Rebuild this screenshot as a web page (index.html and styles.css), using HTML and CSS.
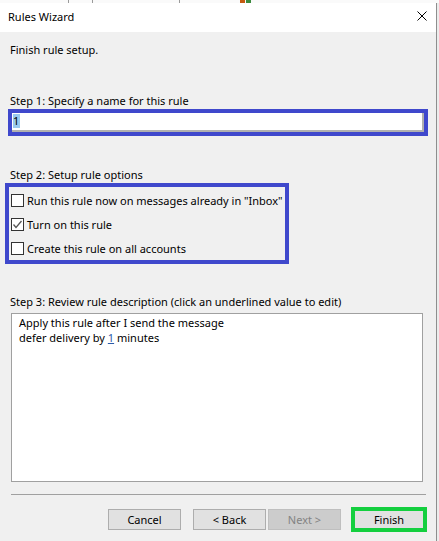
FILE: index.html
```html
<!DOCTYPE html>
<html>
<head>
<meta charset="utf-8">
<title>Rules Wizard</title>
<link rel="stylesheet" href="styles.css">
</head>
<body>
<div class="strip">
  <span class="seg seg-a"></span>
  <span class="seg seg-b"></span>
  <span class="seg seg-c"></span>
  <span class="seg seg-d"></span>
  <span class="chip chip-o"></span>
  <span class="chip chip-g"></span>
  <span class="seg seg-e"></span>
</div>
<div class="dialog">
  <div class="titlebar">
    <span class="title">Rules Wizard</span>
    <svg class="close" width="10" height="10" viewBox="0 0 10 10" aria-hidden="true">
      <path d="M0.5 0.5 L9.5 9.5 M9.5 0.5 L0.5 9.5" stroke="#000" stroke-width="1" fill="none"/>
    </svg>
  </div>
  <div class="content">
    <p class="line intro">Finish rule setup.</p>
    <p class="line step1">Step 1: Specify a name for this rule</p>
    <div class="mark-blue name-mark">
      <div class="textbox"><span class="sel">1</span></div>
    </div>
    <p class="line step2">Step 2: Setup rule options</p>
    <div class="mark-blue opts-mark">
      <div class="row"><span class="cb"></span><span>Run this rule now on messages already in "Inbox"</span></div>
      <div class="row"><span class="cb"><svg width="11" height="11" viewBox="0 0 11 11" aria-hidden="true"><path d="M1.5 5.5 L4 8.5 L9.5 2" stroke="#555" stroke-width="1.3" fill="none"/></svg></span><span>Turn on this rule</span></div>
      <div class="row"><span class="cb"></span><span>Create this rule on all accounts</span></div>
    </div>
    <p class="line step3">Step 3: Review rule description (click an underlined value to edit)</p>
    <div class="desc">
      <div class="line">Apply this rule after I send the message</div>
      <div class="line">defer delivery by <span class="link">1</span> minutes</div>
    </div>
    <div class="sep"></div>
    <div class="buttons">
      <button class="btn">Cancel</button>
      <button class="btn back">&lt; Back</button>
      <button class="btn next" disabled>Next &gt;</button>
      <div class="mark-green"><button class="btn finish">Finish</button></div>
    </div>
  </div>
</div>
</body>
</html>
```

FILE: styles.css
```css
* { box-sizing: border-box; margin: 0; padding: 0; }
html, body { width: 439px; height: 541px; overflow: hidden; }
body {
  background: #ececec;
  font-family: "Noto Sans", "Open Sans", sans-serif;
  font-size: 11px;
  line-height: 15px;
  color: #000;
}

.strip { height: 3px; background: #fafafa; display: flex; }
.seg { height: 3px; border-right: 1px solid #9a9a9a; }
.seg-a { width: 69px; }
.seg-b { width: 24px; }
.seg-c { width: 87px; }
.seg-d { width: 60px; border-right: none; }
.chip { width: 5px; height: 3px; }
.chip-o { background: #c55a11; margin-right: 1px; }
.chip-g { background: #3b8a3e; }
.seg-e { flex: 1; border-right: none; }

.dialog {
  width: 437px;
  height: 538px;
  border-right: 1px solid #8e8e8e;
  display: flex;
  flex-direction: column;
}

.titlebar {
  height: 29px;
  background: #fff;
  display: flex;
  justify-content: space-between;
  align-items: flex-start;
  padding: 6px 9px 0 8px;
}
.title { display: block; }
.close { display: block; margin-top: 2px; }

.content {
  flex: 1;
  background: #f0f0f0;
  padding: 10px 9px 0 10px;
}

.line { display: block; height: 15px; white-space: nowrap; }
.step1 { margin-top: 36px; }
.step2 { margin-top: 31px; }
.step3 { margin-top: 30px; }

.mark-blue { border: 4px solid #3f48cc; }
.name-mark {
  margin-top: 1px;
  margin-left: -2px;
  width: 420px;
  height: 27px;
}
.textbox {
  height: 19px;
  background: #fff;
  border-right: 2px solid #b0b0b0;
  border-bottom: 2px solid #b0b0b0;
  padding: 1px 0 0 1px;
  display: flex;
  align-items: flex-start;
}
.sel {
  background: #99c9ef;
  width: 7px;
  height: 14px;
  line-height: 14px;
  display: block;
}

.opts-mark {
  margin-top: 1px;
  margin-left: -5px;
  width: 284px;
  height: 81px;
  padding: 1px 0 0 2px;
}
.row {
  height: 24px;
  display: flex;
  align-items: center;
  white-space: nowrap;
}
.cb {
  width: 13px;
  height: 13px;
  border: 1px solid #333;
  background: #fff;
  margin-right: 3px;
  flex: none;
  display: flex;
  align-items: center;
  justify-content: center;
}
.cb svg { display: block; }

.desc {
  margin-top: 4px;
  margin-left: 1px;
  width: 412px;
  height: 169px;
  background: #fff;
  border: 1px solid #a0a0a0;
  padding: 1px 0 0 7px;
}
.link { color: #2b5aa8; text-decoration: underline; }

.sep {
  margin-top: 12px;
  margin-left: 1px;
  width: 415px;
  height: 1px;
  background: #a0a0a0;
}

.buttons {
  margin-top: 12px;
  display: flex;
  justify-content: flex-end;
  align-items: center;
}
.btn {
  width: 73px;
  height: 21px;
  background: #e1e1e1;
  border: 1px solid #adadad;
  font: inherit;
  color: #000;
  line-height: 15px;
  padding: 0;
}
.back { margin-left: 12px; }
.next {
  margin-left: 2px;
  background: #cccccc;
  border-color: #bfbfbf;
  color: #838383;
}
.mark-green {
  margin-left: 10px;
  border: 4px solid #14cf3f;
  display: flex;
}
.finish {
  width: 68px;
  height: 17px;
  border: none;
}
```
